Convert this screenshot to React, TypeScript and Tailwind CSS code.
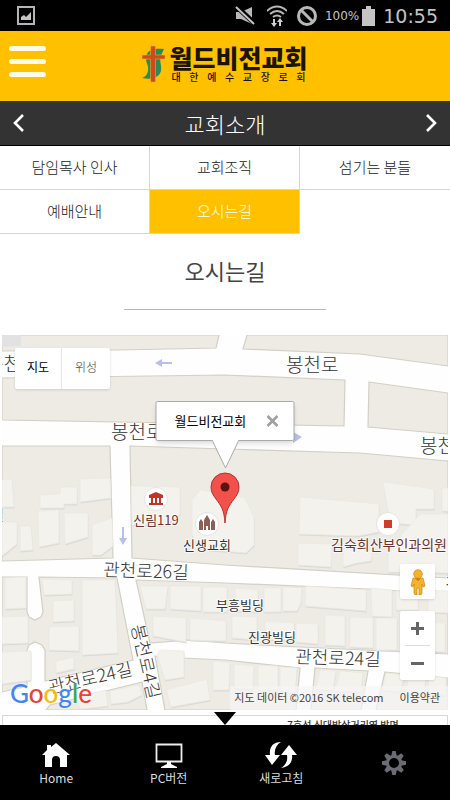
import React from "react";

const tabs = [
  { label: "담임목사 인사", active: false },
  { label: "교회조직", active: false },
  { label: "섬기는 분들", active: false },
  { label: "예배안내", active: false },
  { label: "오시는길", active: true },
];

function StatusBar() {
  return (
    <div className="flex h-[31px] shrink-0 items-center bg-black px-3 text-[#c4c4c4]">
      <svg className="ml-[5px] h-[19px] w-[18px]" viewBox="0 0 18 19" aria-hidden="true">
        <rect x="1" y="1" width="16" height="17" fill="none" stroke="#b5b5b5" strokeWidth="2" />
        <path d="M4 14v-3l3-2 2 2 5-5v8z" fill="#c4c4c4" />
      </svg>
      <div className="ml-auto flex items-center font-['DejaVu_Sans',sans-serif]">
        <svg className="h-5 w-5" viewBox="0 0 20 20" aria-hidden="true">
          <path d="M1 6h5l11-5v17L6 13H1z" fill="#b8b8b8" />
          <path d="M1 0l19 18" stroke="#000" strokeWidth="5" />
          <path d="M1 1l18 17" stroke="#c4c4c4" strokeWidth="2" />
        </svg>
        <svg className="ml-3 h-[22px] w-5" viewBox="0 0 20 22" aria-hidden="true">
          <g fill="none" stroke="#b8b8b8" strokeWidth="2">
            <path d="M0 6q10-9 20 0M3 9q7-6 14 0M6 12q4-3 8 0" />
          </g>
          <path d="M7 14v7M13 21v-7" stroke="#d0d0d0" strokeWidth="2" />
          <path d="M4 18l3 4 3-4zM10 17l3-4 3 4z" fill="#d0d0d0" />
        </svg>
        <svg className="ml-[10px] h-5 w-5" viewBox="0 0 20 20" aria-hidden="true">
          <circle cx="10" cy="10" r="8.5" fill="none" stroke="#b8b8b8" strokeWidth="3" />
          <path d="M4 4l12 12" stroke="#b8b8b8" strokeWidth="3" />
        </svg>
        <span className="ml-2 text-[12px] leading-4">100%</span>
        <svg className="ml-[3px] h-5 w-[13px]" viewBox="0 0 13 20" aria-hidden="true">
          <path d="M4 0h5v3h4v17H0V3h4z" fill="#c4c4c4" />
        </svg>
        <span className="ml-2 text-[19px] leading-6">10:55</span>
      </div>
    </div>
  );
}

function Header() {
  return (
    <header className="relative flex h-[70px] shrink-0 justify-center bg-[#ffc000] pt-[14px]">
      <button type="button" aria-label="메뉴" className="absolute left-[9px] top-[15px] flex w-[37px] flex-col gap-[8px]">
        <span className="h-[5px] rounded-full bg-[#fffbe6]" />
        <span className="h-[5px] rounded-full bg-[#fffbe6]" />
        <span className="h-[5px] rounded-full bg-[#fffbe6]" />
      </button>
      <a href="#home" className="flex h-[40px] gap-1 text-[#1c1400]">
        <svg className="mt-px h-[36px] w-[23px]" viewBox="0 0 23 36" aria-hidden="true">
          <path d="M22 3C12 2 4 4 4 12c0 6 3 7 2 13-1 4-3 6-6 7 9 2 17 0 19-7 1-6-2-10 0-15 1-3 2-5 3-7z" fill="#2c8a55" />
          <path d="M8.500 0h5v9H23v4h-9.500v23h-5V13H0V9h8.500z" fill="#cf4a1c" stroke="#ffc000" strokeWidth=".5" />
        </svg>
        <span className="flex flex-col">
          <span className="h-[26px] whitespace-nowrap text-[25px] font-black leading-[24px]">월드비전교회</span>
          <span className="flex justify-between px-0.5 text-[10px] font-medium leading-[11px]">
            {"대한예수교장로회".split("").map((c, i) => (
              <span key={i}>{c}</span>
            ))}
          </span>
        </span>
      </a>
    </header>
  );
}

function SectionBar() {
  return (
    <div className="flex h-[45px] shrink-0 items-center justify-between border-b border-black bg-[#333] px-3 text-white">
      <button type="button" aria-label="이전">
        <svg className="h-5 w-[13px]" viewBox="0 0 13 20" aria-hidden="true">
          <path d="M11 2L3 10l8 8" fill="none" stroke="#fff" strokeWidth="2.6" />
        </svg>
      </button>
      <h1 className="text-[22px] font-light leading-[44px]">교회소개</h1>
      <button type="button" aria-label="다음">
        <svg className="h-5 w-[13px]" viewBox="0 0 13 20" aria-hidden="true">
          <path d="M2 2l8 8-8 8" fill="none" stroke="#fff" strokeWidth="2.6" />
        </svg>
      </button>
    </div>
  );
}

function Tabs() {
  return (
    <nav className="grid shrink-0 grid-cols-3 text-[15px] font-light leading-[42px]">
      {tabs.map((t, i) => (
        <a
          key={t.label}
          href={"#tab" + i}
          className={
            "block h-[44px] border-b border-[#d6d6d6] text-center " +
            (i === 2 ? "" : "border-r ") +
            (t.active ? "bg-[#ffc000] text-white" : "text-[#222]")
          }
        >
          {t.label}
        </a>
      ))}
    </nav>
  );
}

const blocks = [
  "2,335 219,335 216,348 120,350 2,351",
  "247,335 448,335 448,366 360,354 243,349",
  "2,378 225,375 345,380 344,426 2,420",
  "369,382 448,393 448,434 368,427",
  "2,446 110,446 113,558 2,561",
  "130,446 225,449 360,453 448,461 448,578 225,565 132,558",
  "2,577 27,577 27,612 29,617 35,620 41,617 43,612 39,577 117,578 133,660 45,681 45,650 42,645 35,642 29,645 27,650 27,686 2,692",
  "136,580 225,583 368,589 448,594 448,654 300,647 225,643 188,640 150,643",
  "155,656 183,658 225,660 300,668 296,710 165,710",
  "315,668 368,671 361,710 311,710",
  "385,672 448,678 448,710 376,710",
  "50,705 142,682 147,710 46,710",
];

const buildings = [
  "2,480 12,479 14,507 2,507",
  "40,495 60,494 60,487 77,487 77,504 64,504 64,508 40,508",
  "80,479 110,478 111,498 80,502",
  "38,511 59,510 59,543 39,547",
  "64,513 88,513 88,537 65,544",
  "92,525 112,518 113,546 101,555 92,555",
  "20,526 31,526 33,550 20,551",
  "2,522 17,522 17,544 2,556",
  "131,486 180,487 180,514 166,525 132,525",
  "192,500 200,490 245,498 254,517 254,545 246,553 200,549 192,535",
  "300,497 379,504 379,532 358,536 299,534",
  "383,482 434,489 434,509 416,509 416,525 390,523",
  "298,543 332,544 331,567 298,565",
  "343,548 372,550 371,561 357,563 343,567",
  "420,514 448,514 448,573 388,572 388,550",
  "442,488 448,488 448,511 442,511",
  "5,578 26,577 26,608 5,609",
  "42,579 72,580 72,594 44,595",
  "53,601 74,600 74,621 53,622",
  "2,617 28,616 28,643 2,644",
  "49,627 79,626 79,651 49,650",
  "82,580 115,580 118,653 82,655",
  "2,652 31,651 31,680 2,684",
  "56,661 74,657 74,669 56,673",
  "140,586 168,586 165,609 146,609",
  "170,586 201,586 201,611 170,609",
  "203,587 227,587 227,612 203,612",
  "235,588 258,590 258,612 236,611",
  "264,588 281,588 281,612 264,612",
  "283,587 302,588 301,603 297,611 283,611",
  "306,586 366,590 366,611 305,606",
  "371,588 392,590 392,617 372,616",
  "396,591 418,592 418,610 396,610",
  "428,590 448,591 448,613 428,612",
  "153,616 186,618 186,642 153,636",
  "190,618 226,621 226,641 190,640",
  "232,616 257,617 257,640 232,638",
  "265,621 294,623 294,641 265,639",
  "296,623 318,624 318,644 296,642",
  "325,615 345,616 345,646 325,645",
  "350,617 373,618 373,648 350,647",
  "376,618 397,618 397,650 376,650",
  "402,622 445,623 445,652 402,650",
  "157,655 160,650 184,651 184,677 165,680",
  "166,690 207,679 210,700 171,707",
  "213,661 230,663 229,690 213,690",
  "234,664 254,666 253,689 234,688",
  "258,665 278,666 278,690 258,690",
  "280,667 297,668 295,693 280,691",
  "320,670 336,671 333,690 316,690",
  "340,671 363,673 361,692 335,691",
  "386,673 405,675 400,692 382,690",
  "409,675 426,677 424,695 405,694",
  "429,676 446,678 446,695 428,695",
  "76,697 106,690 108,706 80,709",
  "110,691 139,685 142,695 128,702 111,704",
];

function MapCanvas() {
  return (
    <svg className="block h-full w-full" viewBox="2 335 446 375" preserveAspectRatio="xMidYMid slice" role="img" aria-label="교회 주변 지도">
      <rect x="-400" y="335" width="1300" height="375" fill="#fefefe" />
      <g fill="#edebe4" stroke="#d2d0c4" strokeWidth="1.2">
        {blocks.map((p) => (
          <polygon key={p} points={p} />
        ))}
      </g>
      <path d="M2 335h19v11l-19 1z" fill="#e2e2e2" />
      <g fill="#dadada">
        {buildings.map((p) => (
          <polygon key={p} points={p} transform="translate(0.4 1.4)" />
        ))}
      </g>
      <g fill="#f3f2ed" stroke="#eae8e1" strokeWidth=".7">
        {buildings.map((p) => (
          <polygon key={p} points={p} />
        ))}
      </g>

      <g fill="#b9bfe8">
        <path d="M155 363l7-4v3h10v2h-10v3z" />
        <path d="M302 437l-9-5v11z" />
        <path d="M122 527h2v11h3l-4 7-4-7h3z" />
      </g>

      <g className="font-light" fontSize="19" fill="#333" stroke="#fff" strokeWidth="2" strokeOpacity=".5" paintOrder="stroke">
        <text x="-14" y="371">봉천로</text>
        <text x="286" y="372">봉천로</text>
        <text x="111" y="439">봉천로</text>
        <text x="420" y="453">봉천로</text>
        <text x="-9" y="520" fontSize="14">길</text>
        <text transform="translate(103 576) rotate(2)" fontSize="18">관천로26길</text>
        <text transform="translate(295 663) rotate(2)" fontSize="18">관천로24길</text>
        <text transform="translate(50 694) rotate(-13)" fontSize="18">관천로24길</text>
        <text transform="translate(131 626) rotate(77)" fontSize="18">봉천로4길</text>
        <text x="445" y="592">길</text>
      </g>

      <g fill="#fff" stroke="#ddd" strokeWidth=".8">
        <circle cx="156" cy="499" r="11.5" />
        <circle cx="207" cy="524" r="11.5" />
        <circle cx="388" cy="524" r="11.5" />
      </g>
      <path d="M149 498v-3l7-3 7 3v3h-2v5h2v2h-14v-2h2v-5zM153 498v5h2v-5zM157 498v5h2v-5z" fill="#c33328" fillRule="evenodd" />
      <path d="M199 530v-8l2-3 2 3v8zM204 530v-10l3-5 3 5v10h-2v-4h-2v4zM211 530v-8l2-3 2 3v8z" fill="#8b6055" />
      <rect x="384" y="520" width="8" height="8" fill="#d33a2c" />

      <g fontSize="13" textAnchor="middle" stroke="#fff" strokeWidth="2" strokeOpacity=".7" paintOrder="stroke">
        <text x="156" y="525" fill="#6f332d">신림119</text>
        <text x="207" y="550" fill="#333">신생교회</text>
        <text x="389" y="550" fontSize="14" fill="#6f332d">김숙희산부인과의원</text>
        <text x="240" y="610" fill="#333">부흥빌딩</text>
        <text x="272" y="642" fill="#333">진광빌딩</text>
      </g>

      <path d="M225 523c-1-14-4-17-9-24-3-4-5-7-5-12a14 14 0 0 1 28 0c0 5-2 8-5 12-5 7-8 10-9 24z" fill="#f2504b" stroke="#b03530" strokeWidth="1" />
      <circle cx="225" cy="487" r="4.5" fill="#5c1412" />
    </svg>
  );
}

function InfoWindow() {
  return (
    <div className="absolute left-1/2 top-[66px] flex h-[40px] w-[139px] -translate-x-1/2 items-center justify-between rounded-[2px] border border-[#aaa] bg-white pl-[18px] pr-[15px] shadow-md">
      <svg className="absolute left-[56px] top-[38px] h-[29px] w-[26px]" viewBox="0 0 26 29" aria-hidden="true">
        <path d="M0 0l13 28L26 0z" fill="#fff" />
        <path d="M0 1l13 27L26 1" fill="none" stroke="#aaa" />
      </svg>
      <span className="whitespace-nowrap text-[13px] leading-[34px] text-black">월드비전교회</span>
      <button type="button" aria-label="닫기">
        <svg className="h-[12px] w-[12px]" viewBox="0 0 12 12" aria-hidden="true">
          <path d="M1 1l10 10M11 1L1 11" stroke="#a0a0a0" strokeWidth="2.6" />
        </svg>
      </button>
    </div>
  );
}

function MapPanel() {
  return (
    <section className="relative mx-0.5 h-[375px] shrink-0 overflow-hidden">
      <MapCanvas />
      <div className="absolute left-[13px] top-[13px] flex h-[41px] rounded-[2px] bg-white text-[12px] leading-[36px] shadow">
        <button type="button" className="w-[47px] border-r border-[#e6e6e6] pb-1 text-black">지도</button>
        <button type="button" className="w-[48px] pb-1 font-light text-[#444]">위성</button>
      </div>
      <InfoWindow />
      <div className="absolute right-[13px] top-[229px] flex flex-col gap-3">
        <button type="button" aria-label="스트리트 뷰" className="flex h-[35px] w-[35px] items-center justify-center rounded-[2px] bg-white shadow">
          <svg className="h-[26px] w-[16px]" viewBox="0 0 16 26" aria-hidden="true">
            <path d="M3 9h10l2 8-2 1-1-3v9l-1 2H9v-7H7v7H5l-1-2v-9l-1 3-2-1z" fill="#f3b32b" stroke="#c98716" strokeWidth=".7" />
            <circle cx="8" cy="5" r="4.3" fill="#f3b32b" stroke="#c98716" strokeWidth=".7" />
            <path d="M5 9.500l3 2.500 3-2.500z" fill="#d9731a" />
          </svg>
        </button>
        <div className="flex h-[69px] w-[35px] flex-col rounded-[2px] bg-white px-[5px] shadow">
          <button type="button" aria-label="확대" className="flex flex-1 items-center justify-center border-b border-[#ddd]">
            <svg className="h-[13px] w-[13px]" viewBox="0 0 13 13" aria-hidden="true">
              <path d="M5 0h3v5h5v3H8v5H5V8H0V5h5z" fill="#666" />
            </svg>
          </button>
          <button type="button" aria-label="축소" className="flex flex-1 items-center justify-center">
            <span className="h-[3px] w-[13px] bg-[#666]" />
          </button>
        </div>
      </div>
      <a href="#google" className="absolute bottom-[3px] left-2 font-['Lato',sans-serif] text-[26px] font-medium leading-[28px] [text-shadow:0_0_2px_#fff]">
        <span className="text-[#4285f4]">G</span>
        <span className="text-[#ea4335]">o</span>
        <span className="text-[#fbbc05]">o</span>
        <span className="text-[#4285f4]">g</span>
        <span className="text-[#34a853]">l</span>
        <span className="text-[#ea4335]">e</span>
      </a>
      <div className="absolute bottom-0 right-0 flex h-[24px] gap-4 bg-[#f5f5f5]/70 pl-1 pr-2 text-[11px] leading-[22px] text-[#444]">
        <span>지도 데이터 ©2016 SK telecom</span>
        <a href="#terms">이용약관</a>
      </div>
    </section>
  );
}

const navItem = "flex flex-col items-center pt-[17px] text-[12px] leading-4 text-[#ddd]";

function BottomBar() {
  return (
    <nav className="relative grid h-[75px] shrink-0 grid-cols-4 bg-black">
      <svg className="absolute -top-[13px] left-1/2 h-[13px] w-[22px] -translate-x-1/2" viewBox="0 0 22 13" aria-hidden="true">
        <path d="M0 0h22L11 13z" fill="#000" />
      </svg>
      <a href="#home" className={navItem}>
        <svg className="mb-0.5 h-[26px] w-[28px]" viewBox="0 0 28 26" aria-hidden="true">
          <path d="M14 1l14 12h-3v12h-7v-7a4 4 0 0 0-8 0v7H3V13H0l5-5V3h4v2z" fill="#fff" />
        </svg>
        Home
      </a>
      <a href="#pc" className={navItem}>
        <svg className="mb-0.5 h-[26px] w-[28px]" viewBox="0 0 28 26" aria-hidden="true">
          <path d="M1.500 2.500h25v17h-25z" fill="none" stroke="#eee" strokeWidth="1.800" />
          <path d="M12 20h4v2l6 3v1H6v-1l6-3z" fill="#fff" />
        </svg>
        PC버전
      </a>
      <button type="button" className={navItem}>
        <svg className="mb-0.5 h-[26px] w-[32px]" viewBox="0 0 32 26" aria-hidden="true">
          <path d="M16 0C8 0 4 5 5 13H0l7 10 8-10h-5C9 8 11 3 16 0z" fill="#fff" />
          <path d="M16 26c8-1 12-6 11-13h5L24 3l-8 10h6c1 5-1 10-6 13z" fill="#fff" />
        </svg>
        새로고침
      </button>
      <button type="button" aria-label="설정" className="flex items-center justify-center">
        <svg className="h-6 w-6" viewBox="0 0 24 24" aria-hidden="true">
          <g fill="#6b6b74">
            {[0, 45, 90, 135, 180, 225, 270, 315].map((a) => (
              <path key={a} d="M10.300 0h3.400l1.300 6H9z" transform={`rotate(${a} 12 12)`} />
            ))}
          </g>
          <circle cx="12" cy="12" r="6.500" fill="none" stroke="#6b6b74" strokeWidth="3" />
        </svg>
      </button>
    </nav>
  );
}

export default function App() {
  return (
    <div className="flex h-screen flex-col overflow-hidden bg-white font-['Noto_Sans_CJK_KR',sans-serif]">
      <StatusBar />
      <Header />
      <SectionBar />
      <main className="flex min-h-0 flex-1 flex-col overflow-hidden">
        <Tabs />
        <h2 className="mt-5 shrink-0 text-center text-[22px] font-normal leading-8 text-[#444]">오시는길</h2>
        <hr className="mx-auto mb-[25px] mt-[23px] w-[45%] shrink-0 border-[#b8b8b8]" />
        <MapPanel />
        <div className="mx-0.5 mt-[5px] h-10 shrink-0 border border-[#d8d8d8] pl-[236px] pt-0.5 text-center text-[10px] font-medium leading-[14px] text-[#333]">
          <p>7호선 신대방삼거리역 방면</p>
        </div>
      </main>
      <BottomBar />
    </div>
  );
}
